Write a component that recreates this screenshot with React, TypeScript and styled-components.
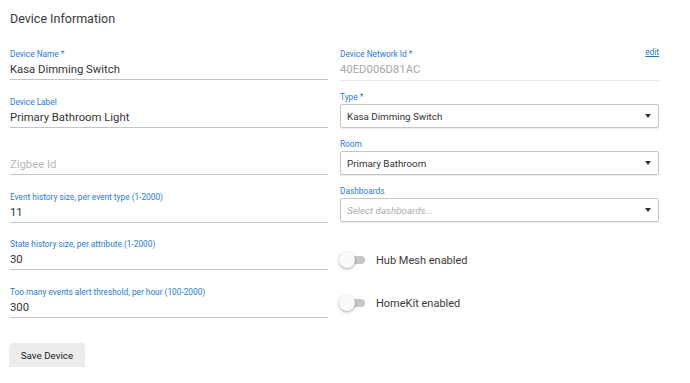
import React from 'react';
import styled, { createGlobalStyle } from 'styled-components';

const GlobalStyle = createGlobalStyle`
  body {
    margin: 0;
    background: #fff;
    font-family: Roboto, "Liberation Sans", Arial, sans-serif;
    color: #333;
  }
`;

const Page = styled.div`
  padding: 11px 10px 0 10px;
  width: 670px;
`;

const Title = styled.div`
  font-size: 12.5px;
  line-height: 16px;
  color: #3a3a3a;
`;

const Columns = styled.div`
  display: grid;
  grid-template-columns: 318px 319px;
  column-gap: 12px;
  margin-top: 7px;
`;

const Column = styled.div`
  display: flex;
  flex-direction: column;
`;

const Field = styled.div<{ $muted?: boolean }>`
  display: flex;
  flex-direction: column;
  padding: 15px 0 ${p => (p.$muted ? '2px' : '1px')} 0;
  border-bottom: 1px solid ${p => (p.$muted ? '#e8e8e8' : '#c4c4c4')};
  margin-bottom: 1.5px;
  position: relative;
`;

const Label = styled.label`
  font-size: 8.3px;
  line-height: 10px;
  height: 10px;
  color: #1f7bd6;
`;

const Value = styled.div<{ $tone?: 'muted' | 'placeholder' }>`
  font-size: 11.3px;
  line-height: 16px;
  margin-top: 3px;
  color: ${p =>
    p.$tone === 'muted' ? '#a8a8a8' : p.$tone === 'placeholder' ? '#b8b8b8' : '#333'};
`;

const EditLink = styled.a`
  position: absolute;
  right: 0;
  top: 13px;
  font-size: 8.3px;
  line-height: 10px;
  color: #1f7bd6;
  text-decoration: underline;
`;

const SelectField = styled.div<{ $first?: boolean }>`
  display: flex;
  flex-direction: column;
  margin-top: ${p => (p.$first ? '9.5px' : '11px')};
`;

const SelectLabel = styled.label`
  font-size: 8.3px;
  line-height: 10px;
  color: #1f7bd6;
  margin-bottom: 2px;
`;

const SelectBox = styled.div<{ $placeholder?: boolean }>`
  height: 24px;
  box-sizing: border-box;
  border: 1px solid #c6c6c6;
  border-radius: 2px;
  box-shadow: 0 1px 1px rgba(0, 0, 0, 0.08);
  display: flex;
  align-items: center;
  justify-content: space-between;
  padding: 0 6px 0 6px;
  font-size: 9.8px;
  color: ${p => (p.$placeholder ? '#adadad' : '#333')};
  font-style: ${p => (p.$placeholder ? 'italic' : 'normal')};
`;

const Caret = styled.span`
  width: 0;
  height: 0;
  border-left: 3.5px solid transparent;
  border-right: 3.5px solid transparent;
  border-top: 4px solid #333;
  margin-right: 1px;
`;

const ToggleRow = styled.div<{ $first?: boolean }>`
  display: flex;
  align-items: center;
  height: 20px;
  margin-top: ${p => (p.$first ? '28px' : '23px')};
`;

const Track = styled.span`
  position: relative;
  width: 22px;
  height: 8px;
  border-radius: 4px;
  background: #c6c6c6;
  margin-left: 3px;
`;

const Thumb = styled.span`
  position: absolute;
  left: -4px;
  top: -4px;
  width: 16px;
  height: 16px;
  border-radius: 50%;
  background: #fafafa;
  box-shadow: 0 1px 3px rgba(0, 0, 0, 0.35);
`;

const ToggleLabel = styled.span`
  font-size: 11px;
  color: #3a3a3a;
  margin-left: 11px;
`;

const SaveButton = styled.button`
  display: block;
  margin-top: 24px;
  width: 74px;
  height: 24px;
  border: none;
  border-radius: 2px;
  background: #ececec;
  box-shadow: 0 2px 2px rgba(0, 0, 0, 0.25);
  font-family: Roboto, "Liberation Sans", Arial, sans-serif;
  font-size: 9.8px;
  color: #222;
  padding: 0;
`;

const leftFields = [
  { label: 'Device Name *', value: 'Kasa Dimming Switch' },
  { label: 'Device Label', value: 'Primary Bathroom Light' },
  { label: '', value: 'Zigbee Id', placeholder: true },
  { label: 'Event history size, per event type (1-2000)', value: '11' },
  { label: 'State history size, per attribute (1-2000)', value: '30' },
  { label: 'Too many events alert threshold, per hour (100-2000)', value: '300' },
];

const selects = [
  { label: 'Type *', value: 'Kasa Dimming Switch' },
  { label: 'Room', value: 'Primary Bathroom' },
  { label: 'Dashboards', value: 'Select dashboards...', placeholder: true },
];

function Toggle({ label, first }: { label: string; first?: boolean }) {
  return (
    <ToggleRow $first={first}>
      <Track>
        <Thumb />
      </Track>
      <ToggleLabel>{label}</ToggleLabel>
    </ToggleRow>
  );
}

export default function App() {
  return (
    <Page>
      <GlobalStyle />
      <Title>Device Information</Title>
      <Columns>
        <Column>
          {leftFields.map(f => (
            <Field key={f.value}>
              <Label>{f.label}</Label>
              <Value $tone={f.placeholder ? 'placeholder' : undefined}>{f.value}</Value>
            </Field>
          ))}
        </Column>
        <Column>
          <Field $muted>
            <Label>Device Network Id *</Label>
            <Value $tone="muted">40ED006D81AC</Value>
            <EditLink href="#">edit</EditLink>
          </Field>
          {selects.map((s, i) => (
            <SelectField key={s.label} $first={i === 0}>
              <SelectLabel>{s.label}</SelectLabel>
              <SelectBox $placeholder={s.placeholder}>
                <span>{s.value}</span>
                <Caret />
              </SelectBox>
            </SelectField>
          ))}
          <Toggle label="Hub Mesh enabled" first />
          <Toggle label="HomeKit enabled" />
        </Column>
      </Columns>
      <SaveButton>Save Device</SaveButton>
    </Page>
  );
}
